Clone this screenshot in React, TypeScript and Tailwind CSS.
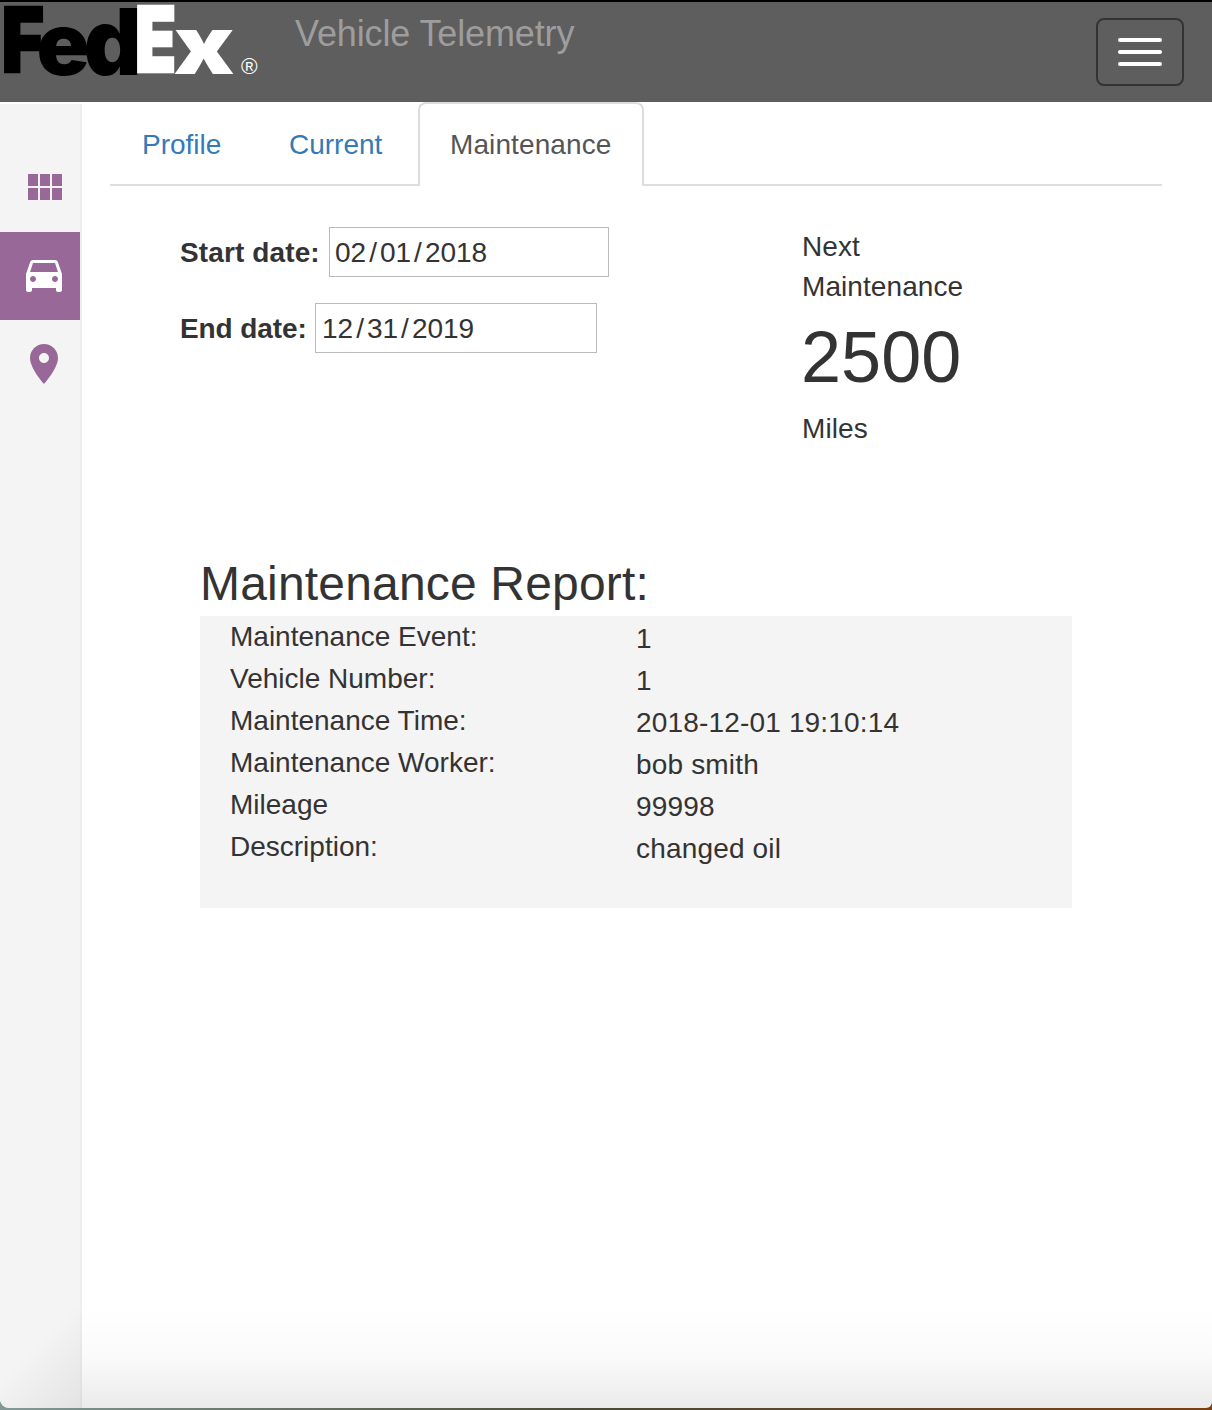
import React from "react";

const reportRows = [
  { label: "Maintenance Event:", value: "1" },
  { label: "Vehicle Number:", value: "1" },
  { label: "Maintenance Time:", value: "2018-12-01 19:10:14" },
  { label: "Maintenance Worker:", value: "bob smith" },
  { label: "Mileage", value: "99998" },
  { label: "Description:", value: "changed oil" },
];

function Logo() {
  return (
    <svg width="264" height="84" viewBox="0 0 264 84" className="block shrink-0 overflow-visible" fontFamily="Inter, 'Liberation Sans', sans-serif" fontWeight="900" fontSize="100">
      <g fill="#000">
        <text transform="translate(1.7 70.4) scale(0.72 0.9)" stroke="#000" strokeWidth="3">F</text>
        <text transform="translate(36.5 72.8) scale(0.88 0.86)">e</text>
        <text transform="translate(83.8 72.8) scale(0.9 0.92)">d</text>
      </g>
      <g fill="#fff">
        <text transform="translate(135.1 70.4) scale(0.67 0.9)" stroke="#fff" strokeWidth="3">E</text>
        <text transform="translate(173.5 71.5) scale(1 0.8)">x</text>
        <text x="241" y="72" fontSize="22.500" fontWeight="400" fontFamily="'Liberation Sans', sans-serif">®</text>
      </g>
    </svg>
  );
}

function Header() {
  return (
    <header className="flex h-[102px] shrink-0 items-start border-t-2 border-black bg-[#5e5e5e]">
      <Logo />
      <div className="ml-[31px] mt-3 text-[36px] leading-10 tracking-[-0.13px] text-[#9d9d9d]">Vehicle Telemetry</div>
      <button className="ml-auto mr-7 mt-4 flex h-[68px] w-[88px] flex-col items-center justify-center gap-2 rounded-lg border-2 border-[#333]">
        <span className="h-1 w-11 rounded-[2px] bg-white" />
        <span className="h-1 w-11 rounded-[2px] bg-white" />
        <span className="h-1 w-11 rounded-[2px] bg-white" />
      </button>
    </header>
  );
}

function NavIcon({ d }: { d: string }) {
  return (
    <svg viewBox="0 0 24 24" className="size-12" fill="currentColor">
      <path d={d} />
    </svg>
  );
}

function Sidebar() {
  return (
    <nav className="mt-0.5 flex w-[82px] shrink-0 flex-col border-r-2 border-[#eee] bg-[#f4f4f4] pt-10 text-[#986898]">
      <a className="flex h-[88px] pl-5 pt-5">
        <NavIcon d="M4 11h5V5H4v6zm0 7h5v-6H4v6zm6 0h5v-6h-5v6zm6 0h5v-6h-5v6zm-6-7h5V5h-5v6zm6-6v6h5V5h-5z" />
      </a>
      <a className="flex h-[88px] bg-[#986898] pl-5 pt-[18px] text-white">
        <NavIcon d="M18.92 6.01C18.72 5.42 18.16 5 17.5 5h-11c-.66 0-1.21.42-1.42 1.01L3 12v8c0 .55.45 1 1 1h1c.55 0 1-.45 1-1v-1h12v1c0 .55.45 1 1 1h1c.55 0 1-.45 1-1v-8l-2.08-5.99zM6.5 16c-.83 0-1.500-.67-1.500-1.500S5.670 13 6.500 13s1.500.67 1.500 1.500S7.330 16 6.500 16zm11 0c-.83 0-1.500-.67-1.500-1.500s.67-1.500 1.500-1.500 1.500.67 1.500 1.500-.67 1.500-1.500 1.500zM5 11l1.500-4.500h11L19 11H5z" />
      </a>
      <a className="flex h-[88px] pl-5 pt-5">
        <NavIcon d="M12 2C8.130 2 5 5.130 5 9c0 5.250 7 13 7 13s7-7.750 7-13c0-3.870-3.130-7-7-7zm0 9.500c-1.380 0-2.500-1.120-2.500-2.500s1.120-2.500 2.500-2.500 2.500 1.120 2.500 2.500-1.120 2.500-2.500 2.500z" />
      </a>
    </nav>
  );
}

function Tabs() {
  return (
    <div className="flex h-[84px] w-[1052px] items-stretch leading-10 text-[#337ab7]">
      <a className="w-[147px] border-b-2 border-[#ddd] pl-8 pt-[23px]">Profile</a>
      <a className="w-[161px] border-b-2 border-[#ddd] pl-8 pt-[23px]">Current</a>
      <a className="w-[226px] rounded-t-lg border-2 border-b-0 border-[#ddd] bg-white pl-[30px] pt-[21px] tracking-[0.1px] text-[#555]">Maintenance</a>
      <div className="grow border-b-2 border-[#ddd]" />
    </div>
  );
}

function DateValue({ parts }: { parts: [string, string, string] }) {
  return (
    <>
      <span>{parts[0]}</span>
      <span className="w-[13.8px] text-center">/</span>
      <span>{parts[1]}</span>
      <span className="w-[13.8px] text-center">/</span>
      <span>{parts[2]}</span>
    </>
  );
}

function DateFilters() {
  return (
    <div className="flex w-[622px] flex-col gap-[26px] pt-[41px]">
      <div className="flex h-[50px]">
        <label className="w-[149px] pt-1.5 font-bold tracking-[0.12px]">Start date:</label>
        <div className="flex w-[280px] border border-[#bbb] pl-[5px] pt-[5px]">
          <DateValue parts={["02", "01", "2018"]} />
        </div>
      </div>
      <div className="flex h-[50px]">
        <label className="w-[135px] pt-1.5 font-bold tracking-[-0.1px]">End date:</label>
        <div className="flex w-[282px] border border-[#bbb] pl-1.5 pt-[5px]">
          <DateValue parts={["12", "31", "2019"]} />
        </div>
      </div>
    </div>
  );
}

function Report() {
  return (
    <section className="ml-[90px] w-[872px]">
      <h2 className="h-[58px] text-[48px] leading-[51px] tracking-[0.18px]">Maintenance Report:</h2>
      <div className="h-[292px] bg-[#f4f4f4] pl-[30px] leading-[42px]">
        {reportRows.map((row) => (
          <div key={row.label} className="flex h-[42px]">
            <div className="w-[406px]">{row.label}</div>
            <div className="pt-0.5 tracking-[0.17px]">{row.value}</div>
          </div>
        ))}
      </div>
    </section>
  );
}

export default function App() {
  return (
    <div className="h-[1410px] w-[1212px] overflow-hidden bg-linear-to-r from-[#849996] via-[#4a4a35] via-50% to-[#7a4012] font-['Liberation_Sans',Arial,sans-serif] text-[28px] leading-10 text-[#333]">
      <div className="relative flex h-[1408px] flex-col overflow-hidden rounded-bl-[9px] rounded-br-[6px] bg-white">
        <Header />
        <div className="flex grow">
          <Sidebar />
          <main className="flex grow flex-col pl-7">
            <Tabs />
            <div className="flex h-[372px] pl-[70px]">
              <DateFilters />
              <div className="w-[180px] pt-[41px] tracking-[0.08px]">
                <div>Next</div>
                <div>Maintenance</div>
                <div className="-ml-px mb-[11px] mt-[10px] text-[72px] leading-[81px]">2500</div>
                <div>Miles</div>
              </div>
            </div>
            <Report />
          </main>
        </div>
        <div className="pointer-events-none absolute bottom-0 left-0 h-[100px] w-[82px] bg-linear-[315deg] from-black/7 to-transparent to-60%" />
        <div className="pointer-events-none absolute bottom-0 left-[82px] right-0 h-[100px] bg-linear-to-t from-black/8 via-black/2 via-50% to-transparent" />
      </div>
    </div>
  );
}
